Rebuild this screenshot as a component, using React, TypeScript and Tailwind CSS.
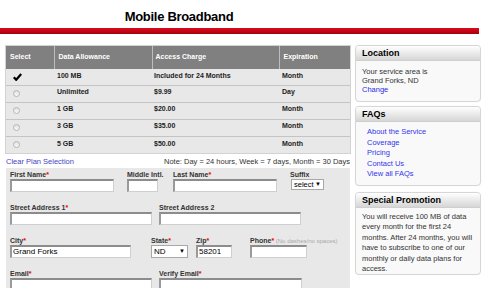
const plans = [
  { size: '100 MB', price: 'Included for 24 Months', exp: 'Month', checked: true },
  { size: 'Unlimited', price: '$9.99', exp: 'Day' },
  { size: '1 GB', price: '$20.00', exp: 'Month' },
  { size: '3 GB', price: '$35.00', exp: 'Month' },
  { size: '5 GB', price: '$50.00', exp: 'Month' },
];

function Check() {
  return (
    <svg width="9" height="8" viewBox="0 0 9 8">
      <path d="M0.8 4.2 L3.2 6.8 L8.2 1" fill="none" stroke="#000" strokeWidth="2.2" />
    </svg>
  );
}

function Radio() {
  return <span className="block w-[7px] h-[7px] rounded-full border border-[#b5b5b5] bg-gradient-to-b from-[#e0e0e0] to-[#fafafa]" />;
}

function Label({ text, req }: { text: string; req?: boolean }) {
  return (
    <div className="h-[9px] leading-[9px] text-[7px] font-bold text-[#333] whitespace-nowrap">
      {text}
      {req && <span className="text-[#e00]">*</span>}
    </div>
  );
}

function Input({ w, value }: { w: string; value?: string }) {
  return (
    <div className={`${w} h-[13px] bg-white border-t-2 border-l-2 border-r border-b border-t-[#8c8c8c] border-l-[#9a9a9a] border-r-[#cfcfcf] border-b-[#cfcfcf] pl-[1px] text-[8px] leading-[10px] text-black`}>
      {value}
    </div>
  );
}

function Box({ title, h, children }: { title: string; h: string; children: React.ReactNode }) {
  return (
    <div className={`${h} rounded-[4px] border border-[#d6d6d6] bg-[#f9f9f9] shadow-[0_0_1px_rgba(0,0,0,0.08)] overflow-hidden`}>
      <div className="h-[15px] bg-gradient-to-b from-white to-[#d6d6d6] border-b border-[#cfcfcf] pl-[6px] text-[9px] leading-[14px] font-bold text-black">
        {title}
      </div>
      {children}
    </div>
  );
}

export default function App() {
  return (
    <div className="w-[492px] h-[288px] overflow-hidden bg-white font-['Liberation_Sans',Arial,sans-serif]">
      {/* header */}
      <div className="pt-[9px]">
        <h1 className="w-[358px] text-center text-[13px] leading-[16px] font-bold tracking-[-0.3px] text-black">Mobile Broadband</h1>
        <div className="mt-[3px] h-[6px] w-[479px] bg-gradient-to-b from-[#dc0a1e] to-[#a8000c]" />
      </div>

      <div className="flex mt-[11px] pl-[5px]">
        {/* left column */}
        <div className="w-[346px] flex flex-col">
          <div className="border border-[#d2d2d2]">
            <table className="w-full border-collapse">
              <thead>
                <tr className="h-[23px] bg-[#808080] text-white text-[7px] font-bold text-left">
                  <th className="w-[48px] pl-[4px] font-bold">Select</th>
                  <th className="w-[98px] pl-[4px] font-bold border-l border-[#bdbdbd]">Data Allowance</th>
                  <th className="w-[127px] pl-[3px] font-bold border-l border-[#bdbdbd]">Access Charge</th>
                  <th className="pl-[4px] font-bold border-l border-[#bdbdbd]">Expiration</th>
                </tr>
              </thead>
              <tbody>
                {plans.map((p, i) => (
                  <tr
                    key={p.size}
                    className={`${i === 0 ? 'h-[16px]' : 'h-[17px] border-t border-[#c4c4c4]'} bg-[#e8e8e8] text-[7px] font-bold text-[#222]`}
                  >
                    <td className="pl-[7px]">{p.checked ? <Check /> : <Radio />}</td>
                    <td className="pl-[3px] pb-[2px]">{p.size}</td>
                    <td className="pl-[2px] pb-[2px]">{p.price}</td>
                    <td className="pl-[3px] pb-[2px]">{p.exp}</td>
                  </tr>
                ))}
              </tbody>
            </table>
          </div>

          <div className="h-[14px] flex items-center justify-between px-[1px] text-[7.5px] leading-[9px]">
            <span className="text-[#4444c4]">Clear Plan Selection</span>
            <span className="text-[#333]">Note: Day = 24 hours, Week = 7 days, Month = 30 Days</span>
          </div>

          {/* form */}
          <div className="mx-[1px] h-[130px] bg-[#e8e8e8] pl-[4px] pt-[2px] flex flex-col gap-[11px]">
            <div className="flex">
              <div className="w-[104px]"><Label text="First Name" req /><Input w="w-[104px]" /></div>
              <div className="ml-[13px] w-[31px]"><Label text="Middle Intl." /><Input w="w-[31px]" /></div>
              <div className="ml-[15px] w-[104px]"><Label text="Last Name" req /><Input w="w-[104px]" /></div>
              <div className="ml-[13px]">
                <Label text="Suffix" />
                <div className="ml-[1px] w-[33px] h-[11px] bg-white border border-[#a8a8a8] flex items-center justify-between px-[2px] text-[7.5px] text-black">
                  <span>select</span>
                  <span className="text-[6px]">▼</span>
                </div>
              </div>
            </div>

            <div className="flex">
              <div className="w-[142px]"><Label text="Street Address 1" req /><Input w="w-[142px]" /></div>
              <div className="ml-[7px] w-[142px]"><Label text="Street Address 2" /><Input w="w-[142px]" /></div>
            </div>

            <div className="flex">
              <div className="w-[121px]"><Label text="City" req /><Input w="w-[121px]" value="Grand Forks" /></div>
              <div className="ml-[20px] w-[37px]">
                <Label text="State" req />
                <div className="w-[37px] h-[13px] bg-white border border-[#a8a8a8] flex items-center justify-between px-[2px] text-[8px] text-black">
                  <span>ND</span>
                  <span className="text-[6px]">▼</span>
                </div>
              </div>
              <div className="ml-[8px] w-[36px]"><Label text="Zip" req /><Input w="w-[36px]" value="58201" /></div>
              <div className="ml-[18px]">
                <div className="h-[9px] leading-[9px] text-[7px] font-bold text-[#333] whitespace-nowrap">
                  Phone<span className="text-[#e00]">*</span>
                  <span className="font-normal text-[6px] text-[#a8a8a8]"> (No dashes/no spaces)</span>
                </div>
                <Input w="w-[57px]" />
              </div>
            </div>

            <div className="flex">
              <div className="w-[142px]"><Label text="Email" req /><Input w="w-[142px]" /></div>
              <div className="ml-[7px] w-[143px]"><Label text="Verify Email" req /><Input w="w-[143px]" /></div>
            </div>
          </div>
        </div>

        {/* sidebar */}
        <div className="ml-[4px] w-[126px] flex flex-col">
          <Box title="Location" h="h-[57px]">
            <div className="pl-[6px] pt-[6px] text-[7.5px] leading-[9px] text-[#333]">
              <div>Your service area is</div>
              <div>Grand Forks, ND</div>
              <div className="text-[#2a2ae8]">Change</div>
            </div>
          </Box>
          <div className="mt-[4px]">
            <Box title="FAQs" h="h-[80px]">
              <div className="pl-[11px] pt-[5px] text-[7.5px] leading-[10.5px] text-[#3434ee]">
                <div>About the Service</div>
                <div>Coverage</div>
                <div>Pricing</div>
                <div>Contact Us</div>
                <div>View all FAQs</div>
              </div>
            </Box>
          </div>
          <div className="mt-[6px]">
            <Box title="Special Promotion" h="h-[83px]">
              <div className="pl-[6px] pt-[4px] text-[7.5px] leading-[10.4px] text-[#333]">
                <div>You will receive 100 MB of data</div>
                <div>every month for the first 24</div>
                <div>months. After 24 months, you will</div>
                <div>have to subscribe to one of our</div>
                <div>monthly or daily data plans for</div>
                <div>access.</div>
              </div>
            </Box>
          </div>
        </div>
      </div>
    </div>
  );
}
